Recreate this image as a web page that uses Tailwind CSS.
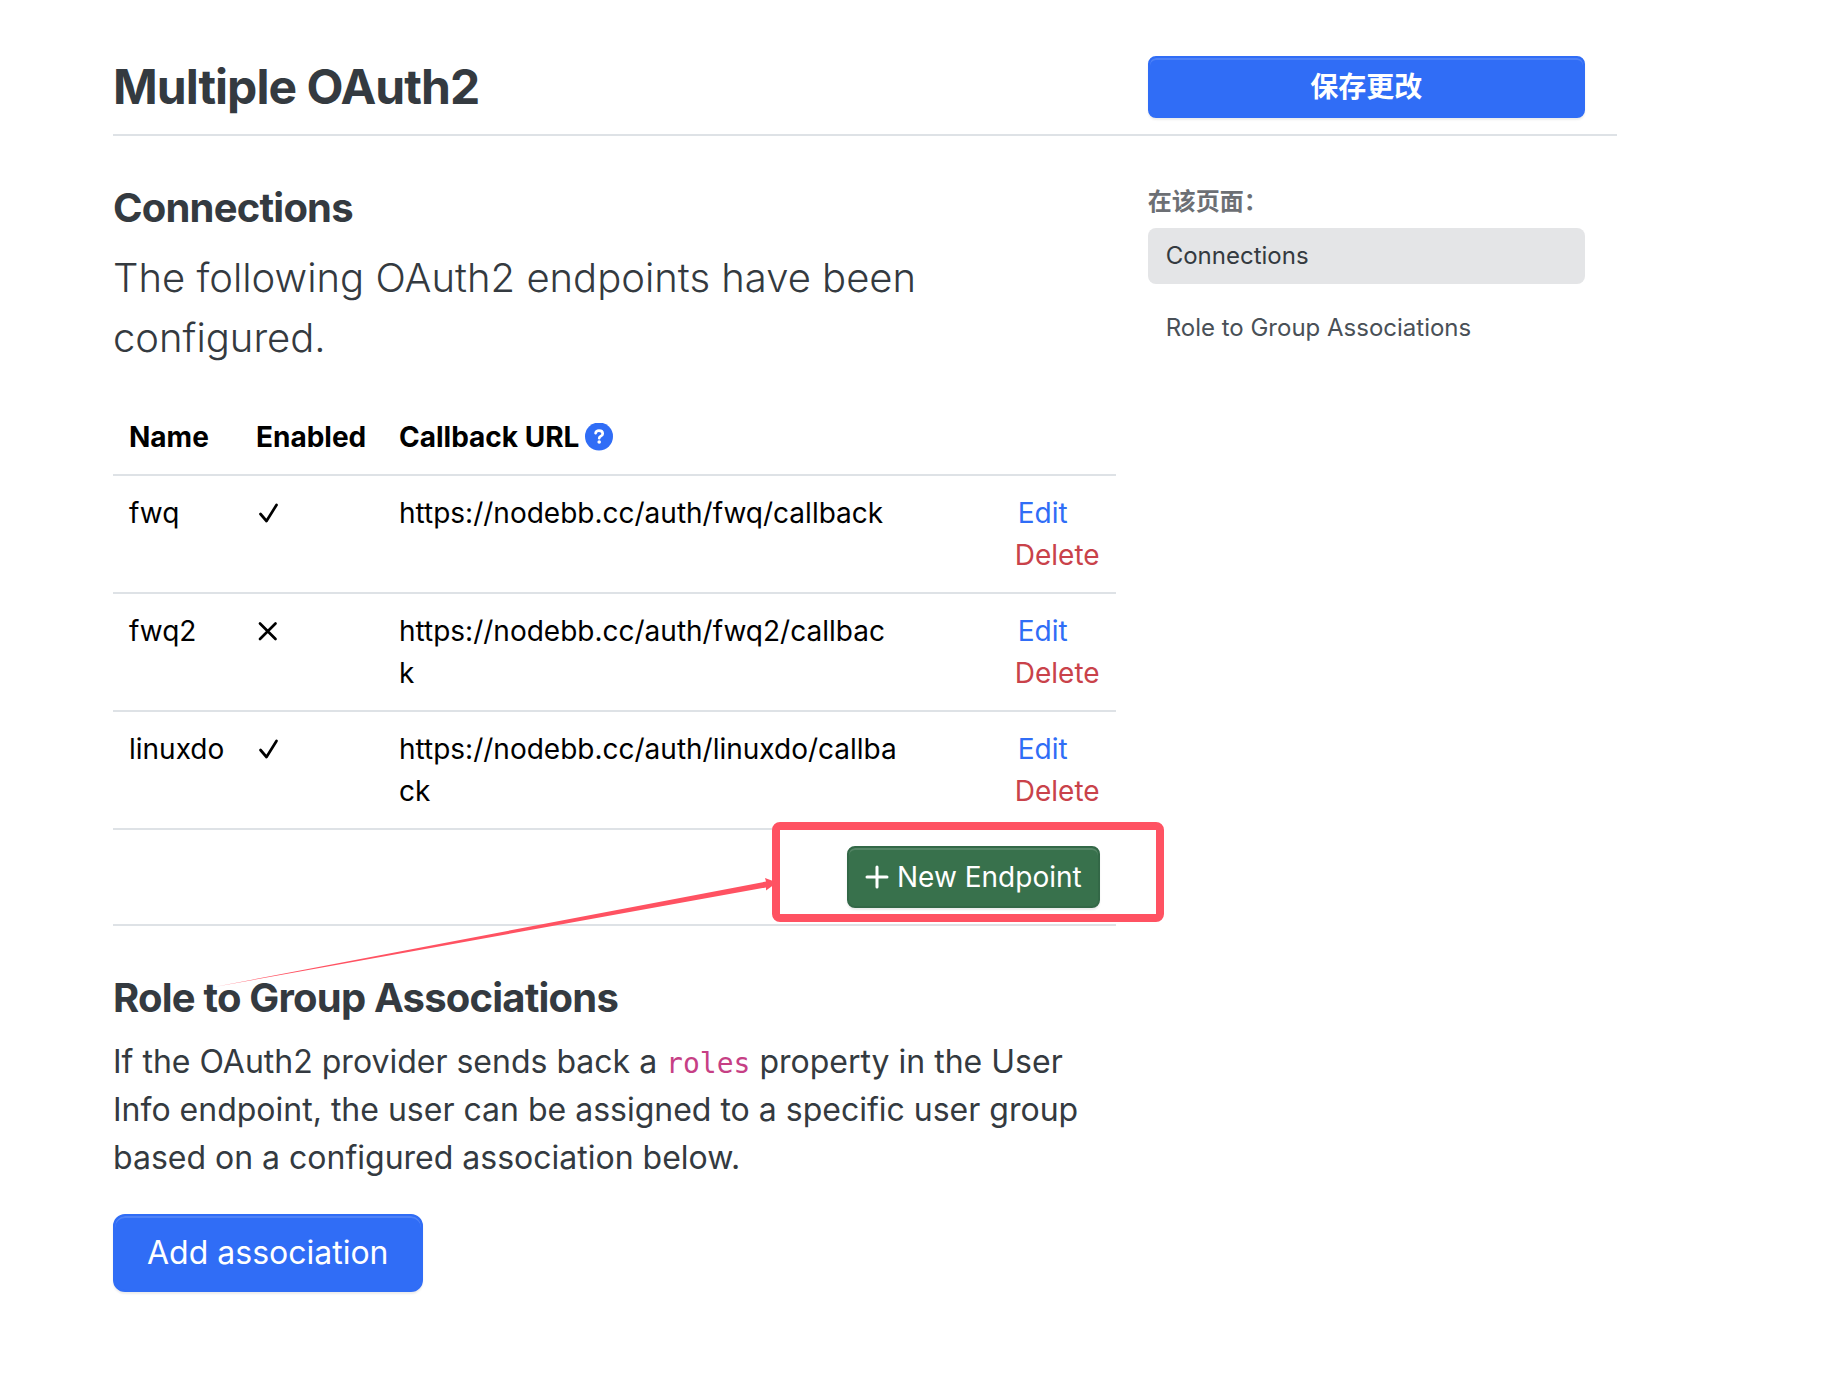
<!DOCTYPE html>
<html lang="zh-CN">
<head>
    <meta charset="UTF-8">
    <meta name="viewport" content="width=device-width, initial-scale=1.0">
    <title>Multiple OAuth2</title>
    <script src="https://cdn.jsdelivr.net/npm/@tailwindcss/browser@4"></script>
</head>
<body class="bg-white font-['Inter','Noto_Sans_CJK_SC',sans-serif] text-[#343a40]">
<div class="pl-[113px] pr-[221px] pt-14 pb-20">
    <!-- Page header -->
    <header class="flex items-center border-b-2 border-[#dee2e6] pb-4">
        <h1 class="w-2/3 text-[48px] leading-[58px] font-bold tracking-[-0.02em]">Multiple OAuth2</h1>
        <div class="w-1/3 px-8">
            <button type="button" class="block w-full h-[62px] rounded-lg border-2 border-[#306df6] bg-[#306df6] text-[28px] leading-[42px] font-bold text-white shadow-[inset_0_2px_0_rgba(255,255,255,0.15),0_2px_2px_rgba(0,0,0,0.075)]">保存更改</button>
        </div>
    </header>

    <div class="flex pt-12">
        <main class="w-2/3">
            <!-- Connections -->
            <section id="connections" class="mb-12">
                <h2 class="mb-4 text-[40px] leading-[48px] font-bold tracking-[-0.02em]">Connections</h2>
                <p class="mb-8 text-[40px] leading-[60px] font-light">The following OAuth2 endpoints have been configured.</p>

                <div class="relative">
                    <table class="w-full table-fixed text-left text-[28px] leading-[42px] text-black">
                        <colgroup>
                            <col class="w-[127px]">
                            <col class="w-[143px]">
                            <col class="w-[532px]">
                            <col>
                        </colgroup>
                        <thead>
                            <tr class="border-b-2 border-[#dee2e6]">
                                <th class="p-4 font-bold">Name</th>
                                <th class="p-4 font-bold">Enabled</th>
                                <th class="p-4 font-bold">
                                    <div class="flex items-center gap-1.5">
                                        Callback URL
                                        <a href="#" aria-label="Help">
                                            <svg class="size-7" viewBox="0 0 28 28">
                                                <circle cx="14" cy="13.500" r="14" fill="#306df6"/>
                                                <path d="M10.600 10.200c.3-1.700 1.500-2.500 3.400-2.500 2.200 0 3.700 1.100 3.700 3 0 2.500-3.500 2.500-3.500 4.500" fill="none" stroke="#fff" stroke-width="2.700" stroke-linecap="round"/>
                                                <circle cx="14.200" cy="19" r="1.800" fill="#fff"/>
                                            </svg>
                                        </a>
                                    </div>
                                </th>
                                <th class="p-4"></th>
                            </tr>
                        </thead>
                        <tbody class="align-top">
                            <tr class="border-b-2 border-[#dee2e6]">
                                <td class="p-4">fwq</td>
                                <td class="p-4">
                                    <svg class="h-[42px] w-6" viewBox="0 0 24 42" fill="none" stroke="#000" stroke-width="2.700" stroke-linecap="round" stroke-linejoin="round"><path d="M4.500 22l6 7L20.500 13"/></svg>
                                </td>
                                <td class="p-4 break-all">https://nodebb.cc/auth/fwq/callback</td>
                                <td class="p-4 text-right">
                                    <a href="#" class="mr-8 block text-[#306df6]">Edit</a>
                                    <a href="#" class="block text-[#c9424a]">Delete</a>
                                </td>
                            </tr>
                            <tr class="border-b-2 border-[#dee2e6]">
                                <td class="p-4">fwq2</td>
                                <td class="p-4">
                                    <svg class="h-[42px] w-6" viewBox="0 0 24 42" fill="none" stroke="#000" stroke-width="2.700" stroke-linecap="round"><path d="M4 13.500l15.500 15.500M19.500 13.500L4 29"/></svg>
                                </td>
                                <td class="p-4 break-all">https://nodebb.cc/auth/fwq2/callback</td>
                                <td class="p-4 text-right">
                                    <a href="#" class="mr-8 block text-[#306df6]">Edit</a>
                                    <a href="#" class="block text-[#c9424a]">Delete</a>
                                </td>
                            </tr>
                            <tr class="border-b-2 border-[#dee2e6]">
                                <td class="p-4">linuxdo</td>
                                <td class="p-4">
                                    <svg class="h-[42px] w-6" viewBox="0 0 24 42" fill="none" stroke="#000" stroke-width="2.700" stroke-linecap="round" stroke-linejoin="round"><path d="M4.500 22l6 7L20.500 13"/></svg>
                                </td>
                                <td class="p-4 break-all">https://nodebb.cc/auth/linuxdo/callback</td>
                                <td class="p-4 text-right">
                                    <a href="#" class="mr-8 block text-[#306df6]">Edit</a>
                                    <a href="#" class="block text-[#c9424a]">Delete</a>
                                </td>
                            </tr>
                        </tbody>
                        <tfoot>
                            <tr class="border-b-2 border-[#dee2e6]">
                                <td colspan="4" class="p-4">
                                    <button type="button" class="ml-auto flex h-[62px] items-center gap-2 rounded-lg border-2 border-[#336847] bg-[#38714c] px-4 text-white shadow-[inset_0_2px_0_rgba(255,255,255,0.15),0_2px_2px_rgba(0,0,0,0.075)]">
                                        <svg class="size-6" viewBox="0 0 24 24" fill="none" stroke="#fff" stroke-width="3" stroke-linecap="round"><path d="M12 2v20M2 12h20"/></svg>
                                        New Endpoint
                                    </button>
                                </td>
                            </tr>
                        </tfoot>
                    </table>

                    <!-- Highlight and arrow pointing at the New Endpoint button -->
                    <svg class="pointer-events-none absolute -right-12 bottom-1 h-[100px] w-[392px]" viewBox="0 0 392 100"><path fill="#ff5262" fill-rule="evenodd" d="M8 0h376a8 8 0 0 1 8 8v84a8 8 0 0 1-8 8H8a8 8 0 0 1-8-8V8a8 8 0 0 1 8-8zM8 8v84h376V8z"/></svg>
                    <svg class="pointer-events-none absolute top-[470px] left-[95px] h-[120px] w-[570px]" viewBox="0 0 570 120"><path fill="#ff5262" d="M6 117L558 11.500L557 8l12 4.500L558 20.500V17.500z"/></svg>
                </div>
            </section>

            <!-- Role to Group Associations -->
            <section id="role-to-group-associations">
                <h2 class="mb-4 text-[40px] leading-[48px] font-bold tracking-[-0.02em]">Role to Group Associations</h2>
                <p class="mb-8 text-[32px] leading-[48px]">If the OAuth2 provider sends back a <code class="font-['DejaVu_Sans_Mono',monospace] text-[28px] leading-none text-[#c63f85]">roles</code> property in the User Info endpoint, the user can be assigned to a specific user group based on a configured association below.</p>
                <button type="button" class="h-[78px] rounded-xl border-2 border-[#306df6] bg-[#306df6] px-8 text-[32px] leading-[48px] text-white shadow-[inset_0_2px_0_rgba(255,255,255,0.15),0_2px_2px_rgba(0,0,0,0.075)]">Add association</button>
            </section>
        </main>

        <!-- Table of contents -->
        <aside class="w-1/3 px-8 text-[24px] leading-[36px]">
            <div class="mb-2 font-bold text-[#6c6f74]">在该页面：</div>
            <nav class="flex flex-col gap-4">
                <a href="#connections" class="rounded-lg bg-[#e4e5e7] px-[18px] py-[10px]">Connections</a>
                <a href="#role-to-group-associations" class="rounded-lg px-[18px] py-[10px] text-[#495057]">Role to Group Associations</a>
            </nav>
        </aside>
    </div>
</div>
</body>
</html>
